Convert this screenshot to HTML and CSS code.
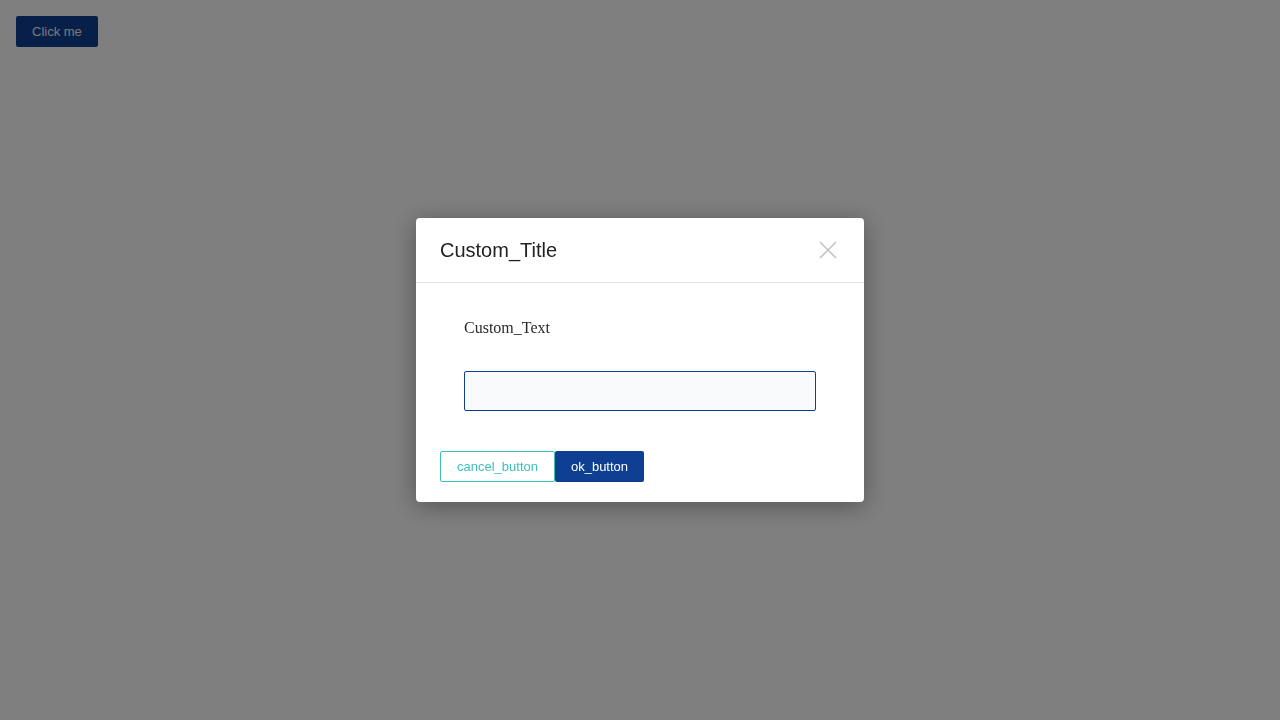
FILE: index.html
```html
<!DOCTYPE html>
<html>
<head>
<meta charset="utf-8">
<link rel="stylesheet" href="styles.css">
</head>
<body>
<div class="page">
  <button class="btn btn-primary">Click me</button>
</div>
<div class="overlay">
  <div class="modal">
    <div class="modal-header">
      <h2 class="modal-title">Custom_Title</h2>
      <span class="close" aria-label="close">
        <svg width="18" height="18" viewBox="0 0 18 18"><path d="M1 1 L17 17 M17 1 L1 17" stroke="#c4c4c4" stroke-width="1.6" fill="none"/></svg>
      </span>
    </div>
    <div class="modal-body">
      <p class="modal-text">Custom_Text</p>
      <input class="modal-input" type="text">
    </div>
    <div class="modal-footer">
      <button class="btn btn-outline">cancel_button</button>
      <button class="btn btn-primary">ok_button</button>
    </div>
  </div>
</div>
</body>
</html>
```
FILE: styles.css
```css
html, body {
  margin: 0;
  padding: 0;
  background: #ffffff;
  height: 100%;
}
.page {
  padding: 16px;
}
.btn {
  font-family: "Liberation Sans", Arial, sans-serif;
  font-size: 13px;
  line-height: 15px;
  padding: 8px 16px;
  border: 0;
  border-radius: 2px;
  cursor: pointer;
  margin: 0;
}
.btn-primary {
  background: #0e3f93;
  color: #ffffff;
}
.page .btn-primary {
  color: #f0f2f6;
}
.btn-outline {
  background: #ffffff;
  color: #3dbfbb;
  border: 1px solid #3dbfbb;
  padding: 7px 16px;
}
.overlay {
  position: fixed;
  inset: 0;
  background: rgba(0, 0, 0, 0.5);
  display: flex;
  align-items: center;
  justify-content: center;
}
.modal {
  width: 448px;
  background: #ffffff;
  border-radius: 4px;
  box-shadow: 0 4px 24px rgba(0, 0, 0, 0.35);
}
.modal-header {
  height: 65px;
  box-sizing: border-box;
  padding: 0 24px;
  display: flex;
  align-items: center;
  justify-content: space-between;
  border-bottom: 1px solid #e4e4e4;
}
.modal-title {
  margin: 0;
  font-family: "Liberation Sans", Arial, sans-serif;
  font-size: 20px;
  font-weight: normal;
  color: #222222;
}
.close {
  display: flex;
  width: 18px;
  height: 18px;
  margin-right: 3px;
}
.modal-body {
  padding: 36px 48px 0;
}
.modal-text {
  margin: 0 0 34px;
  font-family: "Liberation Serif", "Times New Roman", serif;
  font-size: 16px;
  line-height: 18px;
  color: #2a2a2a;
}
.modal-input {
  display: block;
  width: 100%;
  box-sizing: border-box;
  height: 40px;
  border: 1px solid #0e3f93;
  border-radius: 2px;
  background: #f8fafc;
  outline: none;
  padding: 0 10px;
}
.modal-footer {
  padding: 40px 24px 20px;
  display: flex;
}
```
